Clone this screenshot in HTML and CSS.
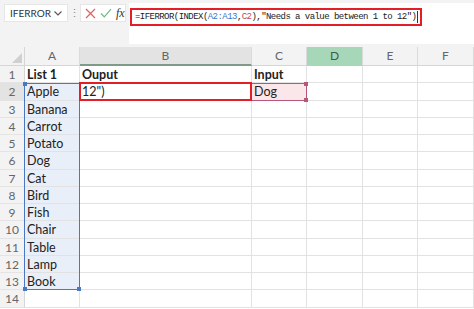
FILE: index.html
```html
<!DOCTYPE html>
<html lang="en">
<head>
    <meta charset="UTF-8">
    <meta name="viewport" content="width=device-width, initial-scale=1.0">
    <title>IFERROR INDEX</title>
    <link rel="stylesheet" href="styles.css">
</head>
<body>
    <div class="toolbar">
        <div class="namebox">
            <span>IFERROR</span>
            <svg class="chevron" width="8" height="5" viewBox="0 0 8 5"><path d="M0.5 0.5 L4 4 L7.5 0.5" fill="none" stroke="#555" stroke-width="1.1"/></svg>
        </div>
        <div class="grip">⋮</div>
        <div class="fx-buttons">
            <svg width="11" height="11" viewBox="0 0 11 11"><path d="M1 1 L10 10 M10 1 L1 10" stroke="#e06060" stroke-width="1.2"/></svg>
            <svg width="12" height="10" viewBox="0 0 12 10"><path d="M1 5.5 L4.3 8.8 L11 1.2" fill="none" stroke="#6cba7d" stroke-width="1.2"/></svg>
            <span class="fx">fx</span>
        </div>
        <div class="formula-bar">
            <div class="formula">=IFERROR(INDEX(<span class="ref-blue">A2:A13</span>,<span class="ref-red">C2</span>),"Needs a value between 1 to 12")<span class="caret"></span></div>
        </div>
    </div>

    <div class="sheet">
        <div class="corner"></div>
        <div class="ch">A</div>
        <div class="ch ch-active">B</div>
        <div class="ch">C</div>
        <div class="ch ch-selected">D</div>
        <div class="ch">E</div>
        <div class="ch">F</div>

        <div class="rh">1</div><div class="c bold">List 1</div><div class="c bold">Ouput</div><div class="c bold">Input</div><div class="c"></div><div class="c"></div><div class="c"></div>
        <div class="rh rh-active">2</div><div class="c">Apple</div><div class="c">12")</div><div class="c">Dog</div><div class="c"></div><div class="c"></div><div class="c"></div>
        <div class="rh">3</div><div class="c">Banana</div><div class="c"></div><div class="c"></div><div class="c"></div><div class="c"></div><div class="c"></div>
        <div class="rh">4</div><div class="c">Carrot</div><div class="c"></div><div class="c"></div><div class="c"></div><div class="c"></div><div class="c"></div>
        <div class="rh">5</div><div class="c">Potato</div><div class="c"></div><div class="c"></div><div class="c"></div><div class="c"></div><div class="c"></div>
        <div class="rh">6</div><div class="c">Dog</div><div class="c"></div><div class="c"></div><div class="c"></div><div class="c"></div><div class="c"></div>
        <div class="rh">7</div><div class="c">Cat</div><div class="c"></div><div class="c"></div><div class="c"></div><div class="c"></div><div class="c"></div>
        <div class="rh">8</div><div class="c">Bird</div><div class="c"></div><div class="c"></div><div class="c"></div><div class="c"></div><div class="c"></div>
        <div class="rh">9</div><div class="c">Fish</div><div class="c"></div><div class="c"></div><div class="c"></div><div class="c"></div><div class="c"></div>
        <div class="rh">10</div><div class="c">Chair</div><div class="c"></div><div class="c"></div><div class="c"></div><div class="c"></div><div class="c"></div>
        <div class="rh">11</div><div class="c">Table</div><div class="c"></div><div class="c"></div><div class="c"></div><div class="c"></div><div class="c"></div>
        <div class="rh">12</div><div class="c">Lamp</div><div class="c"></div><div class="c"></div><div class="c"></div><div class="c"></div><div class="c"></div>
        <div class="rh">13</div><div class="c">Book</div><div class="c"></div><div class="c"></div><div class="c"></div><div class="c"></div><div class="c"></div>
        <div class="rh">14</div><div class="c"></div><div class="c"></div><div class="c"></div><div class="c"></div><div class="c"></div><div class="c"></div>

        <!-- reference highlights over the cells -->
        <div class="fill fill-blue"></div>
        <div class="fill fill-pink"></div>
        <div class="ref-box ref-box-blue"><span class="dot dot-tl"></span><span class="dot dot-bl"></span><span class="dot dot-br"></span></div>
        <div class="ref-box ref-box-pink"><span class="dot dot-tr"></span><span class="dot dot-br"></span></div>
        <div class="edit-box"></div>
    </div>
</body>
</html>
```

FILE: styles.css
```css
body {
    margin: 0;
    width: 474px;
    height: 309px;
    overflow: hidden;
    background: #fff;
    font-family: Lato, "Noto Sans", sans-serif;
    color: #222;
}

/* formula bar strip */
.toolbar {
    display: flex;
    align-items: flex-start;
    height: 47px;
    box-sizing: border-box;
    padding: 3px 0 3px 4px;
    background: #f3f3f3;
}

.namebox {
    display: flex;
    align-items: center;
    justify-content: space-between;
    width: 64px;
    height: 18px;
    margin-top: 1px;
    box-sizing: border-box;
    padding: 0 5px 0 5px;
    background: #fff;
    border: 1px solid #e6e6e6;
    font-size: 10px;
    color: #333;
}

.grip {
    width: 12px;
    margin-top: 3px;
    text-align: center;
    font-size: 11px;
    color: #888;
}

.fx-buttons {
    display: flex;
    align-items: center;
    gap: 4px;
    width: 46px;
    height: 18px;
    margin-top: 1px;
    box-sizing: border-box;
    padding-left: 4px;
    background: #fff;
    border: 1px solid #e6e6e6;
}

.fx {
    font-family: "Liberation Serif", serif;
    font-style: italic;
    font-size: 12px;
    color: #333;
}

.formula-bar {
    flex: 1;
    height: 41px;
    margin-left: 3px;
    background: #fff;
}

.formula {
    display: inline-flex;
    align-items: center;
    height: 18px;
    box-sizing: border-box;
    margin: 1px 0 0 1px;
    padding: 0 2px 0 3px;
    border: 2px solid #e21f26;
    font-family: "Liberation Mono", monospace;
    font-size: 9px;
    letter-spacing: -0.55px;
    color: #222;
    white-space: pre;
}

.ref-blue { color: #3d77c8; }
.ref-red { color: #c0485e; }

.caret {
    display: inline-block;
    width: 1px;
    height: 12px;
    margin-left: 1px;
    background: #333;
}

/* worksheet */
.sheet {
    position: relative;
    isolation: isolate;
    display: grid;
    grid-template-columns: 25px 55px 172px 55px 56px 55px 56px;
    grid-template-rows: 19px repeat(14, 17.25px);
}

.corner {
    position: relative;
    background: #f3f3f3;
    border-right: 1px solid #d6d6d6;
    border-bottom: 1px solid #d6d6d6;
}

.corner::after {
    content: "";
    position: absolute;
    right: 2px;
    bottom: 2px;
    border-left: 10px solid transparent;
    border-bottom: 10px solid #d0d0d0;
}

.ch {
    background: #f3f3f3;
    border-right: 1px solid #dadada;
    border-bottom: 1px solid #d6d6d6;
    text-align: center;
    line-height: 18px;
    font-size: 12px;
    color: #666;
}

.ch-active {
    background: #e3e3e3;
    border-bottom: 2px solid #7f9a89;
}

.ch-selected {
    background: #a6d7b8;
    color: #3f5e4b;
    border-bottom-color: #a6d7b8;
}

.rh {
    background: #f3f3f3;
    border-right: 1px solid #d6d6d6;
    border-bottom: 1px solid #e4e4e4;
    text-align: center;
    line-height: 17px;
    font-size: 12px;
    color: #666;
}

.rh-active { background: #e3e3e3; }

.c {
    border-right: 1px solid #e2e2e2;
    border-bottom: 1px solid #e2e2e2;
    padding-left: 2px;
    line-height: 17px;
    font-size: 12.5px;
    white-space: nowrap;
}

.bold { font-weight: bold; }

/* highlights for referenced ranges */
.fill {
    position: absolute;
    inset: 0;
    z-index: -1;
}

.fill-blue {
    grid-column: 2 / 3;
    grid-row: 3 / 15;
    background: #e9eff8;
}

.fill-pink {
    grid-column: 4 / 5;
    grid-row: 3 / 4;
    background: #fbe6ea;
}

.ref-box {
    position: absolute;
    inset: 0 0 0 -1px;
}

.ref-box-blue {
    grid-column: 2 / 3;
    grid-row: 3 / 15;
    border: 1px solid #4a78c2;
}

.ref-box-pink {
    grid-column: 4 / 5;
    grid-row: 3 / 4;
    border: 1px solid #b5587a;
}

.dot {
    position: absolute;
    width: 4px;
    height: 4px;
}

.ref-box-blue .dot { background: #4a78c2; }
.ref-box-pink .dot { background: #b5587a; }

.dot-tl { top: -2px; left: -2px; }
.dot-tr { top: -2px; right: -2px; }
.dot-bl { bottom: -2px; left: -2px; }
.dot-br { bottom: -2px; right: -2px; }

.edit-box {
    position: absolute;
    inset: -1px 0 0 -1px;
    grid-column: 3 / 4;
    grid-row: 3 / 4;
    border: 2px solid #e21f26;
}
```
